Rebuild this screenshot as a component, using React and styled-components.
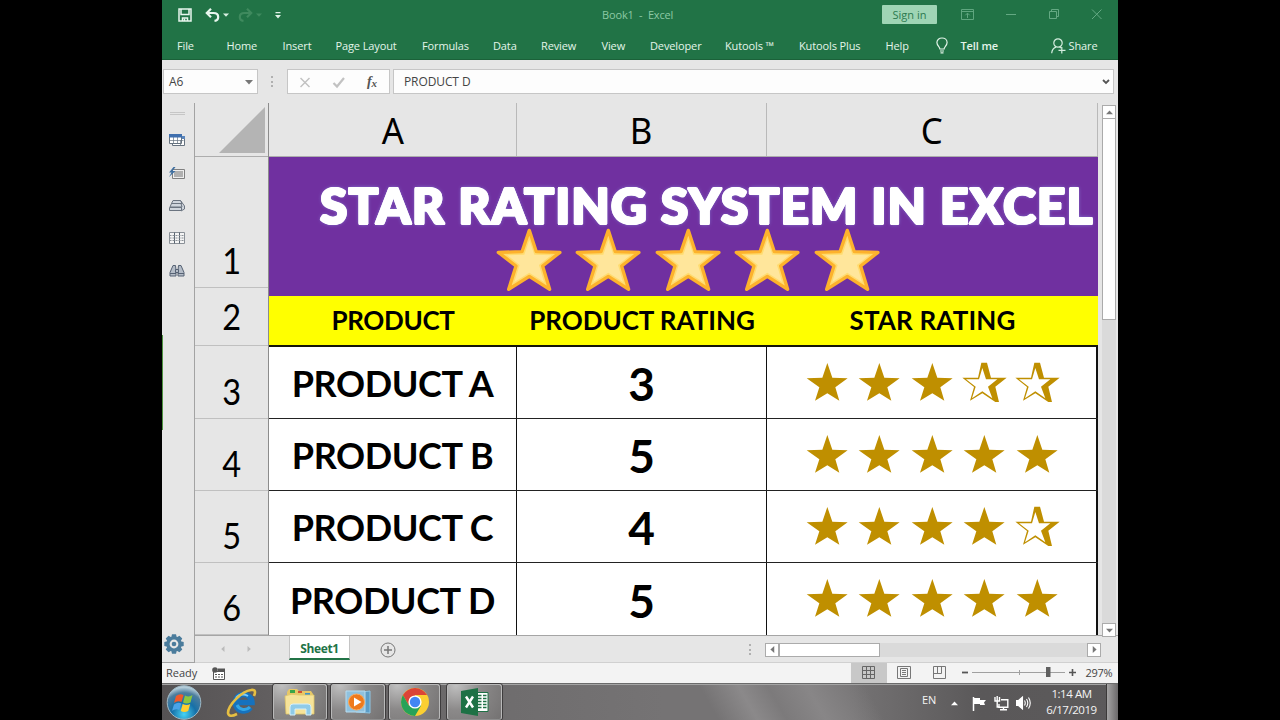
import React from 'react';
import styled, { createGlobalStyle, css } from 'styled-components'

const ui = '"Open Sans", "Noto Sans", sans-serif'
const cellFont = 'Lato, "Open Sans", sans-serif'

const GlobalStyle = createGlobalStyle`
  * { box-sizing: border-box; }
  body {
    margin: 0;
    background: #000;
    overflow: hidden;
  }
  svg { display: block; flex: none; }
`

const Screen = styled.div`
  width: 1280px;
  height: 720px;
  display: flex;
  justify-content: center;
  background: #000;
`

const Desktop = styled.div`
  width: 956px;
  height: 720px;
  display: flex;
  flex-direction: column;
  background: #e6e6e6;
  font-family: ${ui};
  font-size: 11px;
  color: #444;
  overflow: hidden;
`

/* ---------- title bar and ribbon ---------- */

const TitleBar = styled.div`
  height: 30px;
  flex: none;
  display: flex;
  align-items: center;
  background: #217346;
  padding-left: 16px;
`

const QuickAccess = styled.div`
  width: 424px;
  display: flex;
  align-items: center;
`

const WindowTitle = styled.div`
  width: 280px;
  padding-bottom: 2px;
  color: #8cc9a4;
  white-space: pre;
  letter-spacing: -0.15px;
`

const SignIn = styled.div`
  width: 55px;
  height: 19px;
  line-height: 19px;
  margin-bottom: 1px;
  background: #9fd5b5;
  border-radius: 1px;
  color: #2b7a4f;
  text-align: center;
`

const WindowButtons = styled.div`
  display: flex;
  align-items: center;
  padding: 0 0 2px 24px;
`

const Ribbon = styled.div`
  height: 30px;
  flex: none;
  display: flex;
  align-items: center;
  background: #217346;
  border-bottom: 1px solid #1b6139;
  padding: 2px 0 0 15px;
`

const RibbonTab = styled.div`
  width: ${p => p.$w}px;
  color: #e4f5ea;
  white-space: nowrap;
  letter-spacing: -0.12px;
  font-weight: ${p => p.$bold ? 600 : 400};
`

/* ---------- formula bar ---------- */

const FormulaBar = styled.div`
  height: 43px;
  flex: none;
  display: flex;
  align-items: flex-start;
  padding: 9px 4px 0 1px;
`

const Field = styled.div`
  height: 25px;
  width: ${p => p.$w ? p.$w + 'px' : 'auto'};
  flex: ${p => p.$w ? 'none' : 1};
  display: flex;
  align-items: center;
  justify-content: space-between;
  background: #fdfdfd;
  border: 1px solid #c6c6c6;
  padding: 0 ${p => p.$pr || 4}px 0 ${p => p.$pl || 5}px;
  font-size: 12px;
  letter-spacing: ${p => p.$ls || 0}px;
`

const Grip = styled.div`
  width: 2px;
  height: 11px;
  margin: ${p => p.$m};
  background: repeating-linear-gradient(#b0b0b0 0 2px, transparent 2px 4.5px);
`

/* ---------- work area ---------- */

const WorkArea = styled.div`
  height: 560px;
  flex: none;
  display: flex;
`

const SidePanel = styled.div`
  width: 33px;
  flex: none;
  display: flex;
  flex-direction: column;
  align-items: center;
  padding: 9px 2px 8px 0;
  border-right: 1px solid #a3a3a3;
  border-bottom: 1px solid #a3a3a3;
  background: linear-gradient(#4e9440, #4e9440) 0 232px / 1px 95px no-repeat;
`

const PanelHandle = styled.div`
  width: 15px;
  height: 3px;
  border-top: 1px solid #c6c6c6;
  border-bottom: 1px solid #c6c6c6;
`

const PanelTools = styled.div`
  flex: 1;
  display: flex;
  flex-direction: column;
  gap: 16.6px;
  padding-top: 18px;
`

const PanelSettings = styled.div`
  margin-right: 6px;
`

const Book = styled.div`
  flex: 1;
  display: flex;
  flex-direction: column;
`

const Sheet = styled.div`
  height: 533px;
  display: flex;
  border-bottom: 1px solid #a5a5a5;
`

const RowHeads = styled.div`
  width: 74px;
  display: flex;
  flex-direction: column;
  border-right: 1px solid #8c8c8c;
`

const Corner = styled.div`
  height: 54px;
  display: flex;
  justify-content: flex-end;
  align-items: flex-end;
  padding: 0 3px 3px 0;
  border-bottom: 1px solid #adadad;
`

const RowHead = styled.div`
  height: ${p => p.$h}px;
  flex: none;
  display: flex;
  align-items: flex-end;
  justify-content: center;
  padding-bottom: ${p => p.$pb}px;
  border-bottom: 1px solid #c0c0c0;
  font: 400 37px/28px ${cellFont};
  color: #000;
  span { transform: scaleX(.88); }
`

const Cells = styled.div`
  width: 829px;
  display: flex;
  flex-direction: column;
`

const columns = css`
  display: grid;
  grid-template-columns: 248px 250px 331px;
`

const ColHeads = styled.div`
  ${columns}
  height: 54px;
  flex: none;
  border-bottom: 1px solid #adadad;
`

const ColHead = styled.div`
  display: flex;
  align-items: center;
  justify-content: center;
  border-right: 1px solid #b9b9b9;
  font: 400 37px/50px "Noto Sans", sans-serif;
  color: #000;
  span { transform: scaleX(.94); }
`

const Banner = styled.div`
  height: 139px;
  flex: none;
  background: #7030a0;
  overflow: hidden;
`

/* the ring of hard shadows thickens the letters and rounds their corners */
const BannerTitle = styled.div`
  padding: 18px 0 0 51px;
  height: 71px;
  font: 900 49.5px/60px ${cellFont};
  letter-spacing: 1.2px;
  color: #fff;
  white-space: nowrap;
  text-shadow:
    1.3px 0 #fff, -1.3px 0 #fff, 0 1.3px #fff, 0 -1.3px #fff,
    .9px .9px #fff, -.9px .9px #fff, .9px -.9px #fff, -.9px -.9px #fff,
    0 0 4px #8f9be6;
`

const BannerStars = styled.div`
  display: flex;
  gap: 13.3px;
  padding-left: 226.5px;
`

const HeadingRow = styled.div`
  ${columns}
  height: 51px;
  flex: none;
  background: #ff0;
  border-bottom: 2px solid #16160a;
`

const Heading = styled.div`
  font: 700 26px/49px ${cellFont};
  letter-spacing: ${p => p.$ls || 0}px;
  color: #000;
  text-align: center;
  white-space: nowrap;
`

const ProductRow = styled.div`
  ${columns}
  height: 72px;
  flex: none;
  background: #fff;
  border-bottom: 1px solid #222;
  &:last-child { border-bottom: 0; }
`

const Cell = styled.div`
  display: flex;
  align-items: center;
  justify-content: center;
  border-right: ${p => p.$last ? 2 : 1}px solid #111;
  font: 700 ${p => p.$size || 36}px/60px ${cellFont};
  letter-spacing: ${p => p.$ls || 0}px;
  color: #000;
  white-space: nowrap;
  padding: ${p => p.$pt || 0}px 0 ${p => p.$pb || 0}px ${p => p.$pl || 0}px;
`

const Gutter = styled.div`
  flex: 1;
  display: flex;
  flex-direction: column;
  padding: 2px 2px 0 4px;
  margin-bottom: -2px;
`

const ScrollButton = styled.div`
  width: 14px;
  height: 14px;
  flex: none;
  display: flex;
  align-items: center;
  justify-content: center;
  background: #fff;
  border: 1px solid #ababab;
`

const VTrack = styled.div`
  flex: 1;
  background: #dadada;
`

const VThumb = styled.div`
  height: 201px;
  background: #fff;
  border: 1px solid #ababab;
  border-top: 0;
`

/* ---------- sheet tabs, status bar ---------- */

const SheetBar = styled.div`
  height: 27px;
  display: flex;
  align-items: center;
  border-bottom: 1px solid #d0d0d0;
`

const SheetArrows = styled.div`
  width: 94px;
  display: flex;
  gap: 20px;
  padding-left: 25px;
`

const SheetTab = styled.div`
  width: 61px;
  height: 24px;
  align-self: flex-start;
  background: #fff;
  border: solid #c4c4c4;
  border-width: 0 1px;
  border-bottom: 2px solid #217346;
  color: #217346;
  font: 700 12px/25px ${ui};
  letter-spacing: -0.35px;
  text-align: center;
`

const AddSheet = styled.div`
  flex: 1;
  padding: 1px 0 0 30px;
`

const HScroll = styled.div`
  width: 336px;
  height: 14px;
  display: flex;
  background: #dadada;
  margin: 1px 17px 0 0;
`

const HThumb = styled.div`
  width: 101px;
  background: #fff;
  border: 1px solid #ababab;
  margin-right: auto;
`

const StatusBar = styled.div`
  height: 20px;
  flex: none;
  display: flex;
  align-items: center;
  background: #f3f3f3;
  padding-left: 4px;
`

const Ready = styled.div`
  width: 46px;
  padding-bottom: 2px;
`

const ViewButton = styled.div`
  width: 35.5px;
  height: 20px;
  display: flex;
  align-items: center;
  justify-content: center;
  padding-bottom: 1px;
  background: ${p => p.$on ? '#c8c8c8' : 'transparent'};
`

const Zoom = styled.div`
  display: flex;
  align-items: center;
  padding: 0 0 2px 4px;
  gap: 4px;
`

const Percent = styled.div`
  padding-left: 6px;
  width: 36px;
  letter-spacing: -0.3px;
`

/* ---------- taskbar ---------- */

const Taskbar = styled.div`
  height: 37px;
  flex: none;
  display: flex;
  align-items: center;
  border-top: 1px solid #6b6b6b;
  box-shadow: inset 0 1px 0 #a4a4a4;
  background:
    linear-gradient(60deg, transparent 57%, #8b898a 61%, #7c7a7b 64%, #888687 68%, transparent 74%),
    linear-gradient(90deg, #555253 0, #646162 130px, #6f6d6e 350px, #757374 500px, #757374 690px, #5a5859 820px, #5c5a5b 100%);
`

const Orb = styled.div`
  width: 111px;
  height: 36px;
  display: flex;
  align-items: center;
  gap: 22px;
  padding-left: 3.5px;
`

const TaskButton = styled.div`
  width: ${p => p.$w || 54}px;
  height: 36px;
  margin-right: ${p => p.$mr || 4}px;
  display: flex;
  align-items: center;
  justify-content: center;
  border: 1px solid #b9b9b9;
  border-bottom-color: #8d8d8d;
  border-radius: 3px;
  box-shadow: 0 0 0 1px #3e3c3d;
  background: radial-gradient(circle at 15% 0, #c0c0c0 0, #8b8989 45%, #747272 100%);
`

const Tray = styled.div`
  margin-left: auto;
  display: flex;
  align-items: center;
  color: #f4f4f4;
  height: 36px;
`

const Lang = styled.div`
  width: 29px;
  padding-bottom: 5px;
`

const TrayIcons = styled.div`
  display: flex;
  align-items: center;
  gap: 7px;
  padding-top: 2px;
`

const Clock = styled.div`
  width: 69px;
  margin-left: 6px;
  text-align: center;
  font-size: 11.5px;
  line-height: 16px;
  letter-spacing: -0.45px;
  white-space: nowrap;
`

const ShowDesktop = styled.div`
  width: 12px;
  height: 36px;
  border-left: 1px solid #3b3939;
  background: linear-gradient(90deg, #a5a4a4, #6b696a);
`

/* ---------- drawings ---------- */

const Caret = ({ dir = 'down', size = 7, color = '#777' }) => {
  const turn = { down: 0, left: 90, up: 180, right: 270 }[dir]
  return (
    <svg width={size} height={size} viewBox="0 0 8 8">
      <path d="M0 2h8L4 6.4z" fill={color} transform={`rotate(${turn} 4 4)`} />
    </svg>
  )
}

const SaveIcon = () => (
  <svg width="14" height="14" viewBox="0 0 14 14" fill="none" stroke="#e8f6ee" strokeWidth="1.5">
    <path d="M1 1h12v12H1zM3 1v5.500h8V1M4.500 13v-3h5v3" />
    <path d="M6.500 10.500V13" />
  </svg>
)

const UndoIcon = ({ color, flip }) => (
  <svg width="15" height="14" viewBox="0 0 15 14" fill="none" stroke={color} strokeWidth="2.200">
    <g transform={flip ? 'translate(15 0) scale(-1 1)' : undefined}>
      <path d="M6 .8 1.8 5 6 9.2M2 5h6.500c3.100 0 4.700 1.700 4.700 4 0 2.200-1.600 3.600-3.700 3.900" />
    </g>
  </svg>
)

const CustomizeIcon = () => (
  <svg width="6" height="7" viewBox="0 0 6 7" fill="#e0f2e7">
    <path d="M.5 0h5v1.200h-5zM0 3h6L3 6.500z" />
  </svg>
)

const RibbonOptionsIcon = () => (
  <svg width="13" height="11" viewBox="0 0 13 11" fill="none" stroke="#5fa67f">
    <path d="M.5.5h12v10H.5zM.5 2.500h12M6.500 9V4.300M4.300 6.300l2.200-2.200 2.200 2.200" />
  </svg>
)

const WindowIcons = () => (
  <svg width="106" height="12" viewBox="0 0 106 12" fill="none" stroke="#64a983">
    <path d="M0 6.500h10" />
    <path d="M43.500 3.500h7v7h-7zM45.500 3.500v-2h7v7h-2" />
    <path d="m86 1.500 9.500 9.500M95.500 1.500 86 11" />
  </svg>
)

const BulbIcon = () => (
  <svg width="12" height="17" viewBox="0 0 12 17" fill="none" stroke="#e4f5ea" strokeWidth="1.200">
    <path d="M3.900 12c0-2.300-3-3.300-3-6.500C.9 2.900 3.200 1 6 1s5.100 1.900 5.100 4.500c0 3.200-3 4.200-3 6.500zM4 14h4M4.500 15.800h3" />
  </svg>
)

const ShareIcon = () => (
  <svg width="15" height="16" viewBox="0 0 15 16" fill="none" stroke="#d5eee0" strokeWidth="1.200">
    <circle cx="7" cy="5" r="4.200" />
    <path d="M.7 15.300c.2-3 1.800-5.300 4.300-6.200M8.500 9l1.500 1M10.800 9v6.500M7.500 12.300h7" />
  </svg>
)

const FormulaButtons = () => (
  <svg width="80" height="16" viewBox="0 0 80 16" fill="none">
    <path d="m.5 4 9 9M9.500 4l-9 9" stroke="#c2c2c2" strokeWidth="1.500" />
    <path d="m33.500 9 3.500 3.500L44 4" stroke="#c2c2c2" strokeWidth="2.200" />
    <text x="67" y="12" fontFamily="Liberation Serif, serif" fontStyle="italic" fontWeight="700" fontSize="14" fill="#555">f</text>
    <text x="71.500" y="12.500" fontFamily="Liberation Serif, serif" fontStyle="italic" fontWeight="700" fontSize="11" fill="#555">x</text>
  </svg>
)

const ToolIcons = () => (
  <>
    <svg width="16" height="16" viewBox="0 0 16 16" fill="#fff" stroke="#66727f">
      <path d="M3.500 3.500h12v9h-12z" />
      <path d="M.5 1.500h12v9H.5z" />
      <path d="M.5 7.500h14M4.500 4v6M8.500 4v6M11.500 7v5" strokeWidth=".7" />
      <path d="M0 1h13v3.500H0z" fill="#3f6fae" stroke="none" />
      <path d="M13 3h3v3h-3z" fill="#5b86bc" stroke="none" />
    </svg>
    <svg width="16" height="16" viewBox="0 0 16 16">
      <path d="M3.500 3.500h12v9h-12z" fill="#eee" stroke="#808080" />
      <path d="M5 5h9v6H5z" fill="#b0b0b0" />
      <path d="M4.500 1 0 6.500h2.500L0 11l6.500-6H3.500L6.500 1z" fill="#3f6fa0" />
    </svg>
    <svg width="16" height="16" viewBox="0 0 16 16" fill="#cfd5dc" stroke="#6b7480">
      <path d="M11.500 2.500 15.500 8v3L12 13z" />
      <path d="M4 2.500h7.500l1.500 3H2.500zM2.500 5.500H12L13 9H1zM.5 9.500h12v3H.5z" />
    </svg>
    <svg width="16" height="16" viewBox="0 0 16 16" fill="none" stroke="#8a9097">
      <path d="M.5 1.500h15v11H.5z" fill="#f5f5f5" />
      <path d="M5.500 1.500v11M10.500 1.500v11" stroke="#596470" />
      <path d="M.5 4.500h15M.5 7h15M.5 9.500h15" strokeDasharray="2 1" />
    </svg>
    <svg width="16" height="16" viewBox="0 0 16 16" fill="#b4bcc7" stroke="#566274">
      <path d="M4 2.500h2.500l.5 5V13H1V9.500zM9.500 2.500H12l3 7V13H9V7.500z" />
      <path d="M6.500 6.500h3v3h-3z" />
      <path d="M1 10.500h6M9 10.500h6" />
    </svg>
  </>
)

const GearIcon = () => (
  <svg width="20" height="20" viewBox="0 0 20 20">
    <g fill="#4b7c9c">
      {[0, 45, 90, 135].map(a => (
        <path key={a} d="M8 .3h4l1 4H7zM8 19.700h4l1-4H7z" transform={`rotate(${a} 10 10)`} />
      ))}
    </g>
    <circle cx="10" cy="10" r="6" fill="#e6e6e6" stroke="#4b7c9c" strokeWidth="3.200" />
    <circle cx="10" cy="10" r="2.300" fill="#4b7c9c" />
  </svg>
)

const BigStar = () => (
  <svg width="66.300" height="64" viewBox="0 0 199 192">
    <path
      d="M100 7 121 71 192 73 140 114 161 184 100 145 38 184 60 114 7 73 78 71z"
      fill="#ffdc70" stroke="#fdb22c" strokeWidth="10" strokeLinejoin="round"
    />
    <path d="M100 36 115 80 166 82 129 111 144 162 100 134 55 162 71 111 34 82 85 80z" fill="#ffe69b" />
  </svg>
)

const Star = ({ full }) => (
  <svg width="52.500" height="41.300" viewBox="0 0 157.500 124">
    {full
      ? <path d="M79 6 94 50 140 52 103 79 115 119 79 97 42 119 55 79 17 52 64 50z" fill="#bf8f00" />
      : (
        <>
          <path d="M70 5h17l12 45h47l-34 27 11 46h-11L73 97 36 119 48 78 13 50h47z" fill="#bf8f00" />
          <path d="M73 21 84 55 118 55 90 77 103 112 73 91 42 112 53 77 24 55 63 55z" fill="#fff" />
        </>
      )}
  </svg>
)

const MacroIcon = () => (
  <svg width="13" height="13" viewBox="0 0 13 13">
    <path d="M1.500 4.500h11v8h-11z" fill="#fff" stroke="#555" />
    <path d="M6 1.500h7V5H6z" fill="#555" />
    <circle cx="3" cy="3" r="2.800" fill="#555" />
    <path d="M3 7.500h8M3 10h8" stroke="#555" strokeDasharray="2 1" />
  </svg>
)

const viewIcons = [
  <svg width="13" height="13" viewBox="0 0 13 13" fill="none" stroke="#666">
    <path d="M.5.5h12v12H.5zM4.500.5v12M8.500.5v12M.5 4.500h12M.5 8.500h12" />
  </svg>,
  <svg width="14" height="13" viewBox="0 0 14 13" fill="none" stroke="#777">
    <path d="M.5.5h13v12H.5zM3.500 2.500h7v8h-7zM5 4.500h4M5 6.500h4M5 8.500h4" />
  </svg>,
  <svg width="13" height="13" viewBox="0 0 13 13" fill="none" stroke="#777">
    <path d="M.5.5h12v12H.5zM4.500.5v7M8.500.5v7M.5 7.500h8" />
  </svg>,
]

const ZoomSlider = () => (
  <svg width="93" height="12" viewBox="0 0 93 12">
    <path d="M0 6.500h93M47.500 4v5" stroke="#a0a0a0" />
    <path d="M74 1h4.500v10H74z" fill="#606060" />
  </svg>
)

const StartOrb = () => (
  <svg width="36" height="36" viewBox="0 0 36 36">
    <defs>
      <radialGradient id="orb" cx=".5" cy=".85" r=".8">
        <stop offset="0" stopColor="#46d3f5" />
        <stop offset=".45" stopColor="#1670a8" />
        <stop offset=".8" stopColor="#4d7d9d" />
        <stop offset="1" stopColor="#b5cdd9" />
      </radialGradient>
    </defs>
    <circle cx="18" cy="18.500" r="16.800" fill="url(#orb)" stroke="#9fb9c6" />
    <path d="M10 12q4-3 7.500-1l-2 7q-4-2-7.500 1z" fill="#f0592a" />
    <path d="M19 11.500q4 2 7.500-.5l-2 7.500q-4 2-7.500 0z" fill="#8cc63f" />
    <path d="M8 20.500q4-3 7.300-1l-2 6.500q-3.500-2-7.300.8z" fill="#4aa3e8" />
    <path d="M16.700 20q4 2 7.500 0l-2 7q-4 2-7.500 0z" fill="#ffce2e" />
  </svg>
)

const ExplorerIcon = () => (
  <svg width="34" height="34" viewBox="0 0 34 34" fill="none">
    <path d="M26.500 22.500A8.300 8.300 0 1 1 28 17.500H13" stroke="#1672be" strokeWidth="5.500" />
    <path d="M26 22A8 8 0 0 1 13 20" stroke="#33a6e6" strokeWidth="3" />
    <path d="M12 13q5-6 12-2" stroke="#7ccbf6" strokeWidth="2" />
    <path d="M30 11q3-7-3-6C18 6 4 20 4 28q1 5 9 1" stroke="#e6bf42" strokeWidth="2.600" />
  </svg>
)

const FolderIcon = () => (
  <svg width="32" height="28" viewBox="0 0 32 28">
    <path d="M3 4 5 1h8l2 2h12l2 3v18H3z" fill="#e7c867" />
    <path d="M6 2h5v3H6z" fill="#3aa648" />
    <path d="M14 3h4v2h-4z" fill="#d3502f" />
    <path d="M21 5h5v2h-5z" fill="#3e94c9" />
    <path d="M1 8q6-3 14-1h15v19H2z" fill="#f6e399" stroke="#dfc568" strokeWidth=".8" />
    <path d="M6 27v-8q0-3 3-3h15q3 0 3 3v8h-5v-6H11v6z" fill="#8fcbe8" stroke="#d6eff9" />
  </svg>
)

const PlayerIcon = () => (
  <svg width="28" height="26" viewBox="0 0 28 26">
    <path d="M9 4 26 2v22l-14-1z" fill="#5c9dc7" stroke="#8dc5e4" />
    <path d="M2 2h19v21H2z" fill="#8fc1de" stroke="#b7dcf0" />
    <circle cx="12.500" cy="13" r="8" fill="#ee7a1d" stroke="#f9ac62" />
    <path d="M10 8.500v9l7.500-4.500z" fill="#fff" />
  </svg>
)

const ChromeIcon = () => (
  <svg width="28" height="28" viewBox="0 0 28 28">
    <circle cx="14" cy="14" r="14" fill="#fbcf31" />
    <path d="M14 14 7.900 17.500 1.900 7A14 14 0 0 1 26.100 7H14z" fill="#db4437" />
    <path d="M1.900 7A14 14 0 0 0 14 28l6.100-10.500L14 14l-6.100 3.500z" fill="#27a259" />
    <circle cx="14" cy="14" r="6.600" fill="#fff" />
    <circle cx="14" cy="14" r="5.200" fill="#4285f4" />
  </svg>
)

const ExcelIcon = () => (
  <svg width="28" height="28" viewBox="0 0 28 28">
    <path d="M15 4.500h12v19H15z" fill="#fff" stroke="#1e7145" />
    <path d="M17 7.500h3.500M22 7.500h3.500M17 10.500h3.500M22 10.500h3.500M17 13.500h3.500M22 13.500h3.500M17 16.500h3.500M22 16.500h3.500M17 19.500h3.500M22 19.500h3.500" stroke="#1e7145" strokeWidth="1.700" />
    <path d="M0 3 17 0v28L0 25z" fill="#1e7145" />
    <path d="m5 8.500 7 11M12 8.500l-7 11" stroke="#fff" strokeWidth="2.400" />
  </svg>
)

const FlagIcon = () => (
  <svg width="15" height="15" viewBox="0 0 15 15">
    <path d="M1.500 1v14" stroke="#fff" strokeWidth="1.500" />
    <path d="M2 2h6v2h6l-2 2.500 1 2.500H8V8H2z" fill="#fff" />
  </svg>
)

const NetworkIcon = () => (
  <svg width="15" height="15" viewBox="0 0 15 15" fill="none" stroke="#fff" strokeWidth="1.400">
    <path d="M7 3.700h6.800v7.500H5V8M9.500 11v2.500M6 13.800h7" />
    <path d="M1 1v4h4.500V1M3.200 0v11h2" />
  </svg>
)

const SpeakerIcon = () => (
  <svg width="15" height="14" viewBox="0 0 15 14" fill="none" stroke="#fff" strokeWidth="1.100">
    <path d="M.5 4.500h2L6.500 1v12l-4-3.500h-2z" fill="#fff" />
    <path d="M8.500 4.500q1.500 2.500 0 5M10.500 3q2.500 4 0 8M12.500 1.500q3.500 5.500 0 11" />
  </svg>
)

/* ---------- data ---------- */

const tabs = [
  ['File', 49.5], ['Home', 56], ['Insert', 53], ['Page Layout', 86.5],
  ['Formulas', 71], ['Data', 48], ['Review', 60.5], ['View', 48.5],
  ['Developer', 75], ['Kutools ™', 74], ['Kutools Plus', 86.5], ['Help', 50.5],
]

const rowHeads = [[131, 13], [58, 15], [73, 13], [72, 13], [72, 13], [72, 13]]

const products = [
  { name: 'PRODUCT A', rating: 3 },
  { name: 'PRODUCT B', rating: 5 },
  { name: 'PRODUCT C', rating: 4 },
  { name: 'PRODUCT D', rating: 5 },
]

const Rating = ({ value }) => (
  <>{[1, 2, 3, 4, 5].map(n => <Star key={n} full={n <= value} />)}</>
)

const App = () => (
  <Screen>
    <GlobalStyle />
    <Desktop>
      <TitleBar>
        <QuickAccess>
          <SaveIcon />
          <svg width="13" height="1" />
          <UndoIcon color="#e8f6ee" />
          <svg width="3" height="1" />
          <Caret size={6} color="#d9efe2" />
          <svg width="9" height="1" />
          <UndoIcon color="#3f8a5e" flip />
          <svg width="3" height="1" />
          <Caret size={6} color="#3f8a5e" />
          <svg width="13" height="1" />
          <CustomizeIcon />
        </QuickAccess>
        <WindowTitle>{'Book1  -  Excel'}</WindowTitle>
        <SignIn>Sign in</SignIn>
        <WindowButtons>
          <RibbonOptionsIcon />
          <svg width="32" height="1" />
          <WindowIcons />
        </WindowButtons>
      </TitleBar>
      <Ribbon>
        {tabs.map(([label, w]) => <RibbonTab key={label} $w={w}>{label}</RibbonTab>)}
        <RibbonTab $w={24.5}><BulbIcon /></RibbonTab>
        <RibbonTab $w={90} $bold>Tell me</RibbonTab>
        <RibbonTab $w={18}><ShareIcon /></RibbonTab>
        <RibbonTab $w={40}>Share</RibbonTab>
      </Ribbon>

      <FormulaBar>
        <Field $w={95}>A6<Caret size={8} /></Field>
        <Grip $m="7px 14px 0 13px" />
        <Field $w={103} $pl={12}><FormulaButtons /></Field>
        <svg width="3" height="1" />
        <Field $pl={10} $pr={3} $ls={-0.1}>
          PRODUCT D
          <svg width="8" height="6" viewBox="0 0 8 6" fill="none" stroke="#555" strokeWidth="1.800"><path d="m1 1 3 3 3-3" /></svg>
        </Field>
      </FormulaBar>

      <WorkArea>
        <SidePanel>
          <PanelHandle />
          <PanelTools><ToolIcons /></PanelTools>
          <PanelSettings><GearIcon /></PanelSettings>
        </SidePanel>
        <Book>
          <Sheet>
            <RowHeads>
              <Corner>
                <svg width="46" height="46" viewBox="0 0 46 46"><path d="M46 0v46H0z" fill="#b4b4b4" /></svg>
              </Corner>
              {rowHeads.map(([h, pb], i) => (
                <RowHead key={i} $h={h} $pb={pb}><span>{i + 1}</span></RowHead>
              ))}
            </RowHeads>
            <Cells>
              <ColHeads>
                {['A', 'B', 'C'].map(c => <ColHead key={c}><span>{c}</span></ColHead>)}
              </ColHeads>
              <Banner>
                <BannerTitle>STAR RATING SYSTEM IN EXCEL</BannerTitle>
                <BannerStars>
                  {[1, 2, 3, 4, 5].map(n => <BigStar key={n} />)}
                </BannerStars>
              </Banner>
              <HeadingRow>
                <Heading $ls={-0.35}>PRODUCT</Heading>
                <Heading $ls={-0.05}>PRODUCT RATING</Heading>
                <Heading $ls={0.15}>STAR RATING</Heading>
              </HeadingRow>
              {products.map(({ name, rating }) => (
                <ProductRow key={name}>
                  <Cell $pt={1} $ls={-0.4}>{name}</Cell>
                  <Cell $size={46} $pt={3}>{rating}</Cell>
                  <Cell $last $pl={1} $pb={2}><Rating value={rating} /></Cell>
                </ProductRow>
              ))}
            </Cells>
            <Gutter>
              <ScrollButton><Caret dir="up" /></ScrollButton>
              <VTrack><VThumb /></VTrack>
              <ScrollButton><Caret /></ScrollButton>
            </Gutter>
          </Sheet>
          <SheetBar>
            <SheetArrows>
              <Caret dir="left" size={6} color="#bbb" />
              <Caret dir="right" size={6} color="#bbb" />
            </SheetArrows>
            <SheetTab>Sheet1</SheetTab>
            <AddSheet>
              <svg width="16" height="16" viewBox="0 0 16 16" fill="none" stroke="#777">
                <circle cx="8" cy="8" r="7" /><path d="M4 8h8M8 4v8" strokeWidth="1.500" />
              </svg>
            </AddSheet>
            <Grip $m="0 14px 0 0" />
            <HScroll>
              <ScrollButton><Caret dir="left" /></ScrollButton>
              <HThumb />
              <ScrollButton><Caret dir="right" /></ScrollButton>
            </HScroll>
          </SheetBar>
        </Book>
      </WorkArea>

      <StatusBar>
        <Ready>Ready</Ready>
        <MacroIcon />
        <svg width="626" height="1" />
        {viewIcons.map((icon, i) => <ViewButton key={i} $on={i === 0}>{icon}</ViewButton>)}
        <Zoom>
          <svg width="6" height="8" viewBox="0 0 6 8"><path d="M0 4.500h6" stroke="#555" strokeWidth="1.800" /></svg>
          <ZoomSlider />
          <svg width="7" height="8" viewBox="0 0 7 8"><path d="M0 4.500h7M3.500 1v7" stroke="#555" strokeWidth="1.600" /></svg>
          <Percent>297%</Percent>
        </Zoom>
      </StatusBar>

      <Taskbar>
        <Orb><StartOrb /><ExplorerIcon /></Orb>
        <TaskButton><FolderIcon /></TaskButton>
        <TaskButton><PlayerIcon /></TaskButton>
        <TaskButton $w={51} $mr={7}><ChromeIcon /></TaskButton>
        <TaskButton $w={55}><ExcelIcon /></TaskButton>
        <Tray>
          <Lang>EN</Lang>
          <TrayIcons>
            <Caret dir="up" size={7} color="#fff" />
            <svg width="0" height="1" />
            <FlagIcon />
            <NetworkIcon />
            <SpeakerIcon />
          </TrayIcons>
          <Clock>1:14 AM<br />6/17/2019</Clock>
          <ShowDesktop />
        </Tray>
      </Taskbar>
    </Desktop>
  </Screen>
)

export default App
